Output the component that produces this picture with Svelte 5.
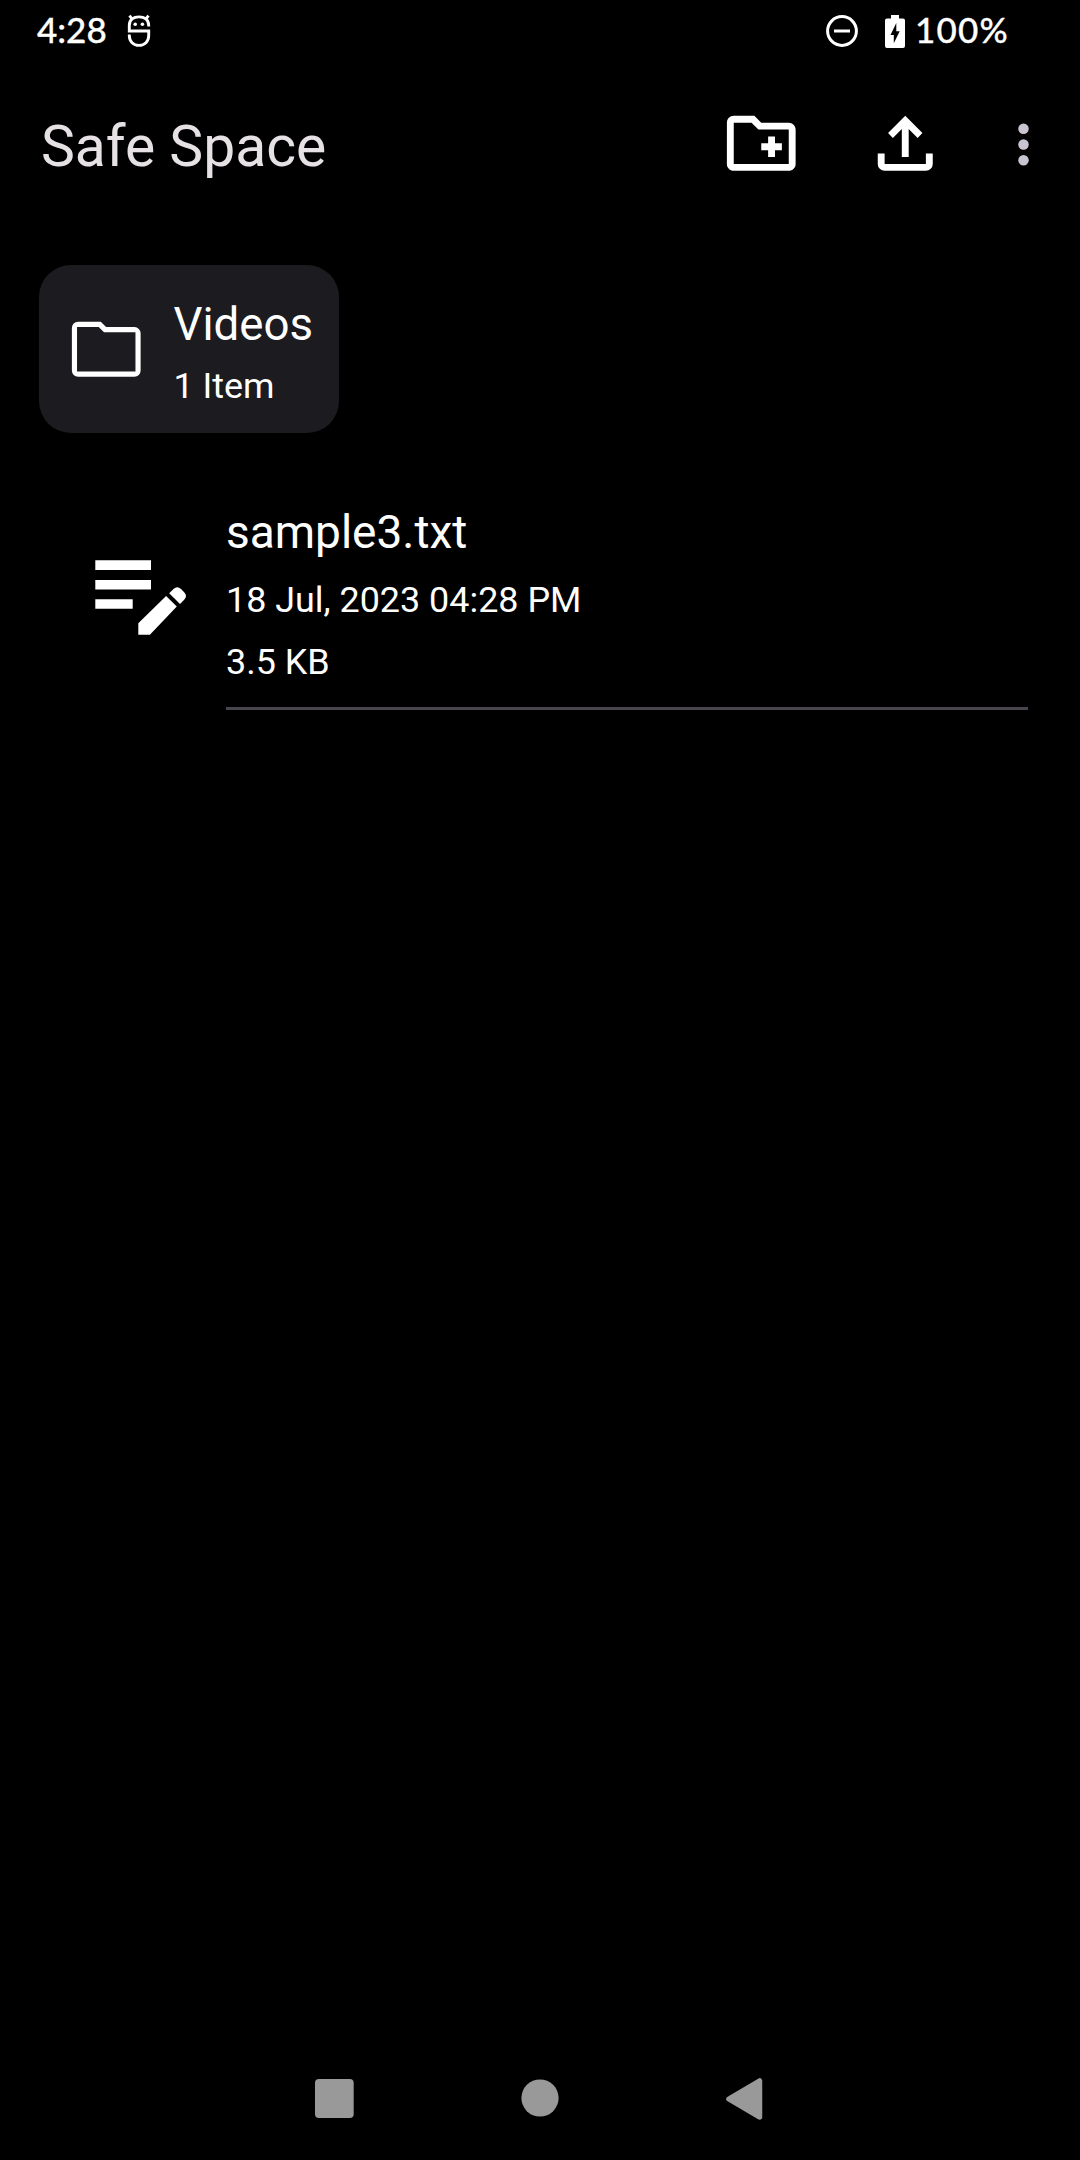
<script>
  const folders = [{ name: 'Videos', count: '1 Item' }];
  const files = [{ name: 'sample3.txt', date: '18 Jul, 2023 04:28 PM', size: '3.5 KB' }];
</script>

<div class="screen">
  <header class="status">
    <span class="clock">4:28</span>
    <svg class="bug" viewBox="0 0 24 34" width="24" height="34">
      <g fill="none" stroke="#fff" stroke-width="2.9">
        <path d="M21.7 12.5V11.4C21.7 5.6 17.4 2.9 12 2.9S2.3 5.6 2.3 11.4V17H21.7V21.5C21.7 27.6 17.6 31.4 12 31.4S2.3 27.6 2.3 21.5V20.6" />
        <path d="M5.4 5.3 2.5 1.6M18.6 5.3 21.5 1.6" />
      </g>
      <circle cx="8.2" cy="10.2" r="1.8" fill="#fff" />
      <circle cx="15.4" cy="10.2" r="1.8" fill="#fff" />
    </svg>
    <span class="spacer"></span>
    <svg class="dnd" viewBox="0 0 34 34" width="34" height="34">
      <circle cx="17" cy="17" r="14.4" fill="none" stroke="#fff" stroke-width="3" />
      <path d="M9 15.5h16v3H9z" fill="#fff" />
    </svg>
    <svg class="battery" viewBox="0 0 20 33" width="20" height="33">
      <path fill="#fff" fill-rule="evenodd" d="M6 0h8v3.5h4q2 0 2 2V31q0 2-2 2H2q-2 0-2-2V5.5q0-2 2-2h4zM11.3 8 5.5 20h3.3v8.3L14.7 16.3h-3.4z" />
    </svg>
    <span class="percent">100%</span>
  </header>

  <nav class="appbar">
    <h1>Safe Space</h1>
    <svg class="newfolder" viewBox="0 0 24 24" width="82.5" height="82.5" fill="#fff">
      <path d="M20 6h-8l-2-2H4c-1.11 0-1.99.89-1.99 2L2 18c0 1.11.89 2 2 2h16c1.11 0 2-.89 2-2V8c0-1.11-.89-2-2-2zm0 12H4V6h5.17l2 2H20v10zm-8-4h2v2h2v-2h2v-2h-2v-2h-2v2h-2z" />
    </svg>
    <svg class="upload" viewBox="0 0 24 24" width="82.5" height="82.5" fill="#fff">
      <path d="M11 16V7.85l-2.6 2.6L7 9l5-5 5 5-1.4 1.45-2.6-2.6V16h-2Zm-5 4q-.825 0-1.412-.587Q4 18.825 4 18v-3h2v3h12v-3h2v3q0 .825-.587 1.413Q18.825 20 18 20H6Z" />
    </svg>
    <svg class="more" viewBox="0 0 24 24" width="63" height="63" fill="#cac4d0">
      <circle cx="12" cy="6" r="2" /><circle cx="12" cy="12" r="2" /><circle cx="12" cy="18" r="2" />
    </svg>
  </nav>

  <main>
    <section class="folders">
      {#each folders as folder}
        <article class="card">
          <svg viewBox="0 0 24 24" width="82.5" height="82.5">
            <path fill="#fff" fill-rule="evenodd" d="M3.8 20q-.75 0-1.275-.525Q2 18.95 2 18.2V5.8q0-.75.525-1.275T3.8 4h6.6l1.55 1.55h8.25q.75 0 1.275.525T22 7.35V18.2q0 .75-.525 1.275T20.2 20zM3.5 18.5h17V7.05h-9.15L9.8 5.5H3.5z" />
          </svg>
          <div class="label">
            <span class="name">{folder.name}</span>
            <span class="meta">{folder.count}</span>
          </div>
        </article>
      {/each}
    </section>

    <section class="files">
      {#each files as file}
        <article class="file">
          <svg viewBox="95 560 92 76" width="92" height="76" fill="#fff">
            <path d="M95.3 560.3h55.7v9.7H95.300zM95.300 580h55.700v9.500H95.300zM95.300 599.200h37.400v9.500H95.300z" />
            <path d="M138.300 634.700v-11.400l27.800-27.200 10.700 10.500L149.900 634.700z" />
            <path d="M169.200 593.200l4.300-4.200q3.700-3.500 7.500 0l3.200 3.200q3.700 3.800 0 7.500l-4.200 4.200z" />
          </svg>
          <div class="info">
            <span class="name">{file.name}</span>
            <span class="meta">{file.date}</span>
            <span class="meta">{file.size}</span>
          </div>
        </article>
      {/each}
    </section>
  </main>

  <footer>
    <svg class="recents" viewBox="0 0 39 39" width="39" height="39"><rect width="38.7" height="39" rx="4" fill="#999" /></svg>
    <svg class="home" viewBox="0 0 38 38" width="38" height="38"><circle cx="19" cy="19" r="18.6" fill="#999" /></svg>
    <svg class="back" viewBox="0 0 37 42" width="37" height="42">
      <path d="M3 21 33.5 3V39z" fill="#999" stroke="#999" stroke-width="5.5" stroke-linejoin="round" />
    </svg>
  </footer>
</div>

<style>
  :global(body) {
    background: #000;
  }
  .screen {
    width: 1080px;
    height: 2160px;
    display: flex;
    flex-direction: column;
    background: #000;
    color: #fff;
    font-family: Roboto, sans-serif;
    overflow: hidden;
  }
  svg {
    display: block;
    flex: none;
  }
  span,
  h1 {
    white-space: nowrap;
  }
  .status {
    height: 62px;
    box-sizing: border-box;
    padding: 0 71px 0 37px;
    display: flex;
    align-items: center;
    font-family: Lato, sans-serif;
    font-weight: 500;
    font-size: 35px;
    -webkit-text-stroke: 0.3px #fff;
  }
  .clock {
    width: 90px;
    margin-bottom: 4px;
  }
  .spacer {
    flex: 1;
  }
  .dnd {
    margin-right: 26px;
  }
  .battery {
    margin-right: 10px;
  }
  .percent {
    width: 94px;
    margin-bottom: 4px;
    letter-spacing: 1.2px;
  }
  .appbar {
    height: 162px;
    box-sizing: border-box;
    display: flex;
    align-items: center;
    padding: 0 25.5px 0 41px;
  }
  h1 {
    flex: 1;
    margin: 7px 0 0;
    font-size: 57px;
    line-height: 68px;
    font-weight: 400;
    color: #e6e1e5;
  }
  .newfolder {
    margin-right: 61.5px;
  }
  .upload {
    margin-right: 45.5px;
  }
  .more {
    margin-top: 2px;
  }
  main {
    flex: 1;
    padding: 41px 52px 0 39px;
  }
  .folders {
    display: flex;
  }
  .card {
    width: 300px;
    height: 168px;
    box-sizing: border-box;
    padding-left: 26px;
    border-radius: 32px;
    background: #1c1b1f;
    display: flex;
    align-items: center;
  }
  .label {
    margin: 13px 0 0 26px;
    display: flex;
    flex-direction: column;
  }
  .name {
    font-size: 45.6px;
    line-height: 60px;
  }
  .meta {
    font-size: 35.9px;
    line-height: 62px;
  }
  .files {
    margin-top: 68px;
  }
  .file {
    display: flex;
    padding-left: 56px;
  }
  .file svg {
    margin-top: 59px;
  }
  .info {
    flex: 1;
    margin-left: 39px;
    height: 209px;
    box-sizing: border-box;
    border-bottom: 3px solid #49454f;
    display: flex;
    flex-direction: column;
  }
  .info .name {
    margin: 1px 0 7px;
    font-size: 46px;
  }
  footer {
    height: 124px;
    display: flex;
    align-items: center;
    padding-left: 314.7px;
  }
  .recents {
    margin-top: 1px;
  }
  .home {
    margin-left: 167.3px;
  }
  .back {
    margin: 2px 0 0 166.8px;
  }
</style>
